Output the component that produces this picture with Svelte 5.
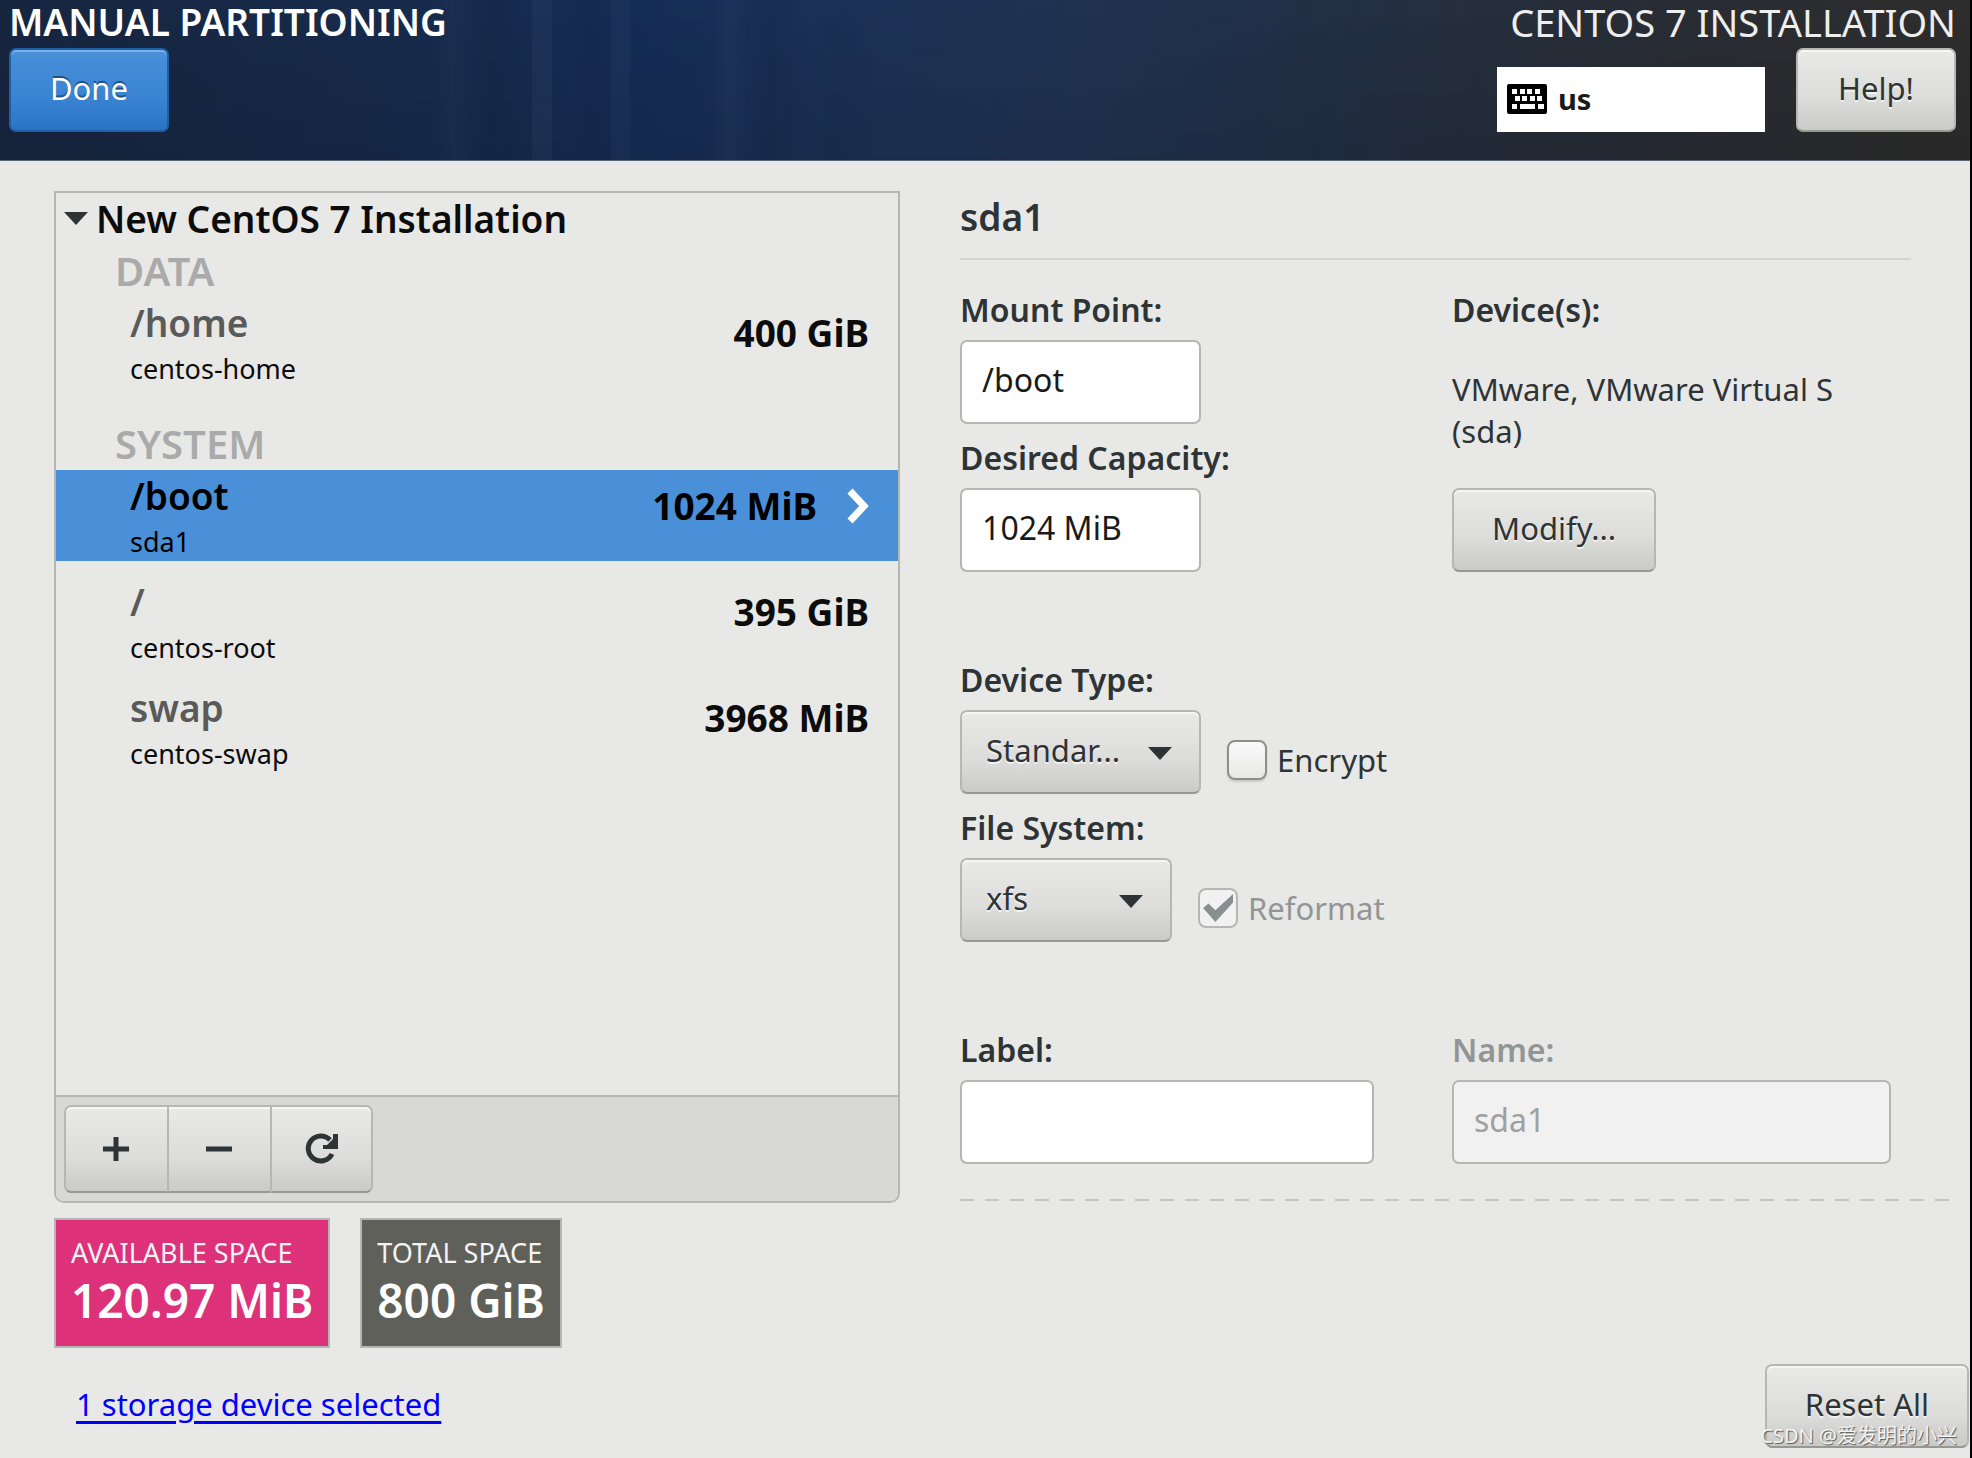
<script lang="ts">
	type Partition = { mount: string; device: string; size: string };

	const groups: { name: string; items: Partition[] }[] = [
		{
			name: 'DATA',
			items: [{ mount: '/home', device: 'centos-home', size: '400 GiB' }]
		},
		{
			name: 'SYSTEM',
			items: [
				{ mount: '/boot', device: 'sda1', size: '1024 MiB' },
				{ mount: '/', device: 'centos-root', size: '395 GiB' },
				{ mount: 'swap', device: 'centos-swap', size: '3968 MiB' }
			]
		}
	];

	// keyboard icon keys: x, y, width
	const keys = [
		[5, 5, 5], [13, 5, 5], [20, 5, 5], [28, 5, 5],
		[8, 12, 5], [15, 12, 5], [23, 12, 5], [30, 12, 5],
		[5, 20, 5], [13, 20, 15], [31, 20, 6]
	];

	let selected = $state('/boot');
	let open = $state(true);
	let mount_point = $state('/boot');
	let capacity = $state('1024 MiB');
	let encrypt = $state(false);
	let label = $state('');
</script>

<div class="page">
	<header>
		<div class="side">
			<h1>MANUAL PARTITIONING</h1>
			<button class="btn primary">Done</button>
		</div>
		<div class="side right">
			<p class="product">CENTOS 7 INSTALLATION</p>
			<div class="tools">
				<div class="keyboard">
					<svg width="40" height="30" viewBox="0 0 40 30" aria-hidden="true">
						<rect width="40" height="30" rx="2" />
						{#each keys as [x, y, w]}
							<rect {x} {y} width={w} height="5" fill="#fff" />
						{/each}
					</svg>
					<span>us</span>
				</div>
				<button class="btn help">Help!</button>
			</div>
		</div>
	</header>

	<main>
		<section class="left">
			<div class="panel">
				<div class="tree">
					<button class="root" onclick={() => (open = !open)}>
						<svg width="24" height="14" viewBox="0 0 24 14" aria-hidden="true">
							<path d="M0 0h24L12 13z" fill="#2e3436" />
						</svg>
						New CentOS 7 Installation
					</button>
					{#if open}
						{#each groups as group (group.name)}
							<h2 class="category">{group.name}</h2>
							<ul>
								{#each group.items as item (item.mount)}
									<li>
										<button
											class="row"
											class:selected={selected === item.mount}
											onclick={() => (selected = item.mount)}
										>
											<span class="names">
												<span class="mount">{item.mount}</span>
												<span class="device">{item.device}</span>
											</span>
											<span class="size">{item.size}</span>
											{#if selected === item.mount}
												<svg class="chevron" width="22" height="36" viewBox="0 0 22 36" aria-hidden="true">
													<path d="M3 3l14 15L3 33" fill="none" stroke="#fff" stroke-width="7" />
												</svg>
											{/if}
										</button>
									</li>
								{/each}
							</ul>
						{/each}
					{/if}
				</div>
				<div class="toolbar">
					<div class="group">
						<button class="btn" aria-label="Add">
							<svg width="34" height="34" viewBox="0 0 34 34">
								<path d="M16 5v24M3 17h26" stroke="#2e3436" stroke-width="5" />
							</svg>
						</button>
						<button class="btn" aria-label="Remove">
							<svg width="34" height="34" viewBox="0 0 34 34">
								<path d="M3 17h26" stroke="#2e3436" stroke-width="5" />
							</svg>
						</button>
						<button class="btn" aria-label="Reload">
							<svg width="34" height="34" viewBox="0 0 34 34">
								<path d="M27 22A12.500 12.500 0 1 1 25 8" fill="none" stroke="#2e3436" stroke-width="5" />
								<path d="M33 2v15H18v-4h4l6-6V2z" fill="#2e3436" />
							</svg>
						</button>
					</div>
				</div>
			</div>

			<div class="spaces">
				<div class="space available">
					<span>AVAILABLE SPACE</span>
					<strong>120.97 MiB</strong>
				</div>
				<div class="space">
					<span>TOTAL SPACE</span>
					<strong>800 GiB</strong>
				</div>
			</div>
		</section>

		<section class="details">
			<h2 class="title">sda1</h2>

			<div class="fields">
				<div>
					<label for="mount">Mount Point:</label>
					<input id="mount" class="entry short" type="text" bind:value={mount_point} />
					<label for="capacity">Desired Capacity:</label>
					<input id="capacity" class="entry short" type="text" bind:value={capacity} />
				</div>
				<div>
					<h3>Device(s):</h3>
					<p class="disk">VMware, VMware Virtual S (sda)</p>
					<button class="btn">Modify...</button>
				</div>
			</div>

			<div class="fields">
				<div>
					<label for="type">Device Type:</label>
					<div class="line">
						<div class="select type">
							<select id="type" class="btn"><option>Standar...</option></select>
							<svg width="24" height="13" viewBox="0 0 24 13" aria-hidden="true">
								<path d="M0 0h24L12 13z" fill="#2e3436" />
							</svg>
						</div>
						<label class="check">
							<input type="checkbox" bind:checked={encrypt} />
							Encrypt
						</label>
					</div>
					<label for="fs">File System:</label>
					<div class="line">
						<div class="select fs">
							<select id="fs" class="btn"><option>xfs</option></select>
							<svg width="24" height="13" viewBox="0 0 24 13" aria-hidden="true">
								<path d="M0 0h24L12 13z" fill="#2e3436" />
							</svg>
						</div>
						<label class="check disabled">
							<input type="checkbox" checked disabled />
							Reformat
						</label>
					</div>
				</div>
			</div>

			<div class="fields">
				<div>
					<label for="label">Label:</label>
					<input id="label" class="entry" type="text" bind:value={label} />
				</div>
				<div>
					<label for="name" class="disabled">Name:</label>
					<input id="name" class="entry" type="text" value="sda1" disabled />
				</div>
			</div>

			<div class="dashes"></div>
		</section>
	</main>

	<footer>
		<a href="#storage">1 storage device selected</a>
		<div class="reset">
			<button class="btn">Reset All</button>
			<span class="watermark">CSDN @爱发明的小兴</span>
		</div>
	</footer>
</div>

<style>
	:global(body) {
		background: #e8e8e6;
	}
	.page {
		display: flex;
		flex-direction: column;
		box-sizing: border-box;
		min-height: 100vh;
		border-right: 2px solid #000;
		background: #e8e8e6;
		color: #2e3436;
		font: 31px/42px 'Noto Sans', 'Noto Sans CJK SC', sans-serif;
	}
	h1, h2, h3, p, ul {
		margin: 0;
		padding: 0;
		font-size: inherit;
	}
	ul {
		list-style: none;
	}
	button, input, select {
		box-sizing: border-box;
		margin: 0;
		font: inherit;
		color: inherit;
	}

	/* header */
	header {
		display: flex;
		justify-content: space-between;
		padding: 0 14px 28px 9px;
		border-bottom: 1px solid #5b6579;
		background:
			linear-gradient(to right, transparent 22%, #ffffff05 23%, transparent 24%, #0000000c 25%, transparent 27%, #ffffff08 27% 28%, transparent 28% 29%, #0000000c 30%, transparent 31%, #ffffff06 31% 32%, transparent 32% 36%, #ffffff06 37%, transparent 38%, #0000000c 39%, transparent 41%, #00000008 43%, transparent 45%),
			linear-gradient(to bottom, transparent, #00000018),
			linear-gradient(to right, #16263f, #172a4a 18%, #152c55 32%, #1b3156 44%, #1f3250 55%, #212f46 66%, #252e3b 76%, #292c33 87%, #2d2d2d 97%);
		background-clip: padding-box;
		color: #fff;
	}
	.side {
		display: flex;
		flex-direction: column;
		align-items: flex-start;
		gap: 4px;
	}
	.right {
		align-items: flex-end;
	}
	h1 {
		font-size: 37px;
		font-weight: 600;
		line-height: 44px;
	}
	.product {
		font-size: 38px;
		line-height: 44px;
		color: #eee;
	}
	.tools {
		display: flex;
		align-items: flex-end;
		gap: 31px;
	}
	.keyboard {
		display: flex;
		align-items: center;
		gap: 11px;
		box-sizing: border-box;
		width: 268px;
		height: 65px;
		padding: 0 0 2px 10px;
		background: #fff;
		color: #1a1a1a;
		font-size: 29px;
		font-weight: 700;
	}

	/* buttons */
	.btn {
		height: 84px;
		padding: 0 38px 4px;
		border: 2px solid #b6b6b3;
		border-bottom-color: #989892;
		border-radius: 7px;
		background: linear-gradient(#e9e9e8, #dcdcda 60%, #cacac8);
		box-shadow: inset 0 2px #f6f6f5;
		color: #2e3436;
		text-shadow: 0 2px #f2f2f0;
	}
	.primary {
		width: 160px;
		border-color: #1f5fa8;
		background: linear-gradient(#4a90d9, #3983d2 60%, #2a74c4);
		box-shadow: inset 0 2px #80b1e4;
		color: #fff;
		text-shadow: 0 -2px #1f5287;
	}
	.help {
		width: 160px;
	}

	main {
		flex: 1;
		display: grid;
		grid-template-columns: 11fr 13fr;
		gap: 60px;
		padding: 30px 10px 0 54px;
	}
	.left {
		display: flex;
		flex-direction: column;
	}

	/* partition list */
	.panel {
		flex: 1;
		display: flex;
		flex-direction: column;
		border: 2px solid #b6b6b3;
		border-radius: 0 0 10px 10px;
		overflow: hidden;
	}
	.tree {
		flex: 1;
		font-size: 37px;
		font-weight: 600;
		line-height: 52px;
		color: #0c0c0c;
	}
	.root {
		display: flex;
		align-items: center;
		gap: 8px;
		padding: 0 0 0 8px;
		border: none;
		background: none;
	}
	.category {
		padding-left: 59px;
		font-size: 40px;
		font-weight: 600;
		color: #aaa;
	}
	ul + .category {
		margin-top: 30px;
	}
	ul {
		display: flex;
		flex-direction: column;
		gap: 15px;
	}
	.row {
		display: flex;
		align-items: flex-start;
		width: 100%;
		padding: 0 29px 0 74px;
		border: none;
		background: none;
		text-align: left;
	}
	.names {
		flex: 1;
		display: flex;
		flex-direction: column;
	}
	.mount {
		line-height: 52px;
		color: #5a5a5a;
	}
	.device {
		font-size: 27px;
		font-weight: 400;
		line-height: 39px;
	}
	.size {
		font-weight: 700;
		line-height: 72px;
	}
	.selected {
		background: #4a90d9;
		color: #000;
	}
	.selected .mount {
		color: #000;
	}
	.chevron {
		margin: 18px 0 0 30px;
	}
	.toolbar {
		padding: 8px;
		border-top: 2px solid #b6b6b3;
		background: #d8d8d6;
	}
	.group {
		display: flex;
	}
	.group .btn {
		display: grid;
		place-items: center;
		width: 103px;
		height: 88px;
		padding: 0;
		border-right-width: 0;
		border-radius: 0;
	}
	.group .btn:first-child {
		border-radius: 7px 0 0 7px;
	}
	.group .btn:last-child {
		border-right-width: 2px;
		border-radius: 0 7px 7px 0;
	}

	/* space summary */
	.spaces {
		display: flex;
		gap: 30px;
		margin-top: 15px;
	}
	.space {
		display: flex;
		flex-direction: column;
		padding: 12px 15px 20px;
		border: 2px solid #b6b6b3;
		background: #5f6059;
		color: #fff;
	}
	.available {
		background: #dd3279;
	}
	.space span {
		font-size: 27px;
		line-height: 42px;
		color: #f3f3f3;
	}
	.space strong {
		font-size: 46px;
		font-weight: 600;
		line-height: 52px;
	}

	/* details form */
	.title {
		margin-right: 49px;
		padding-bottom: 15px;
		border-bottom: 2px solid #d2d2d0;
		font-size: 37px;
		font-weight: 600;
		line-height: 52px;
	}
	.fields {
		display: grid;
		grid-template-columns: 414fr 439fr;
		gap: 78px;
		margin-top: 74px;
		padding-right: 69px;
	}
	.title + .fields {
		margin-top: 16px;
	}
	.fields label, h3 {
		display: block;
		padding-top: 4px;
		font-size: 32px;
		font-weight: 600;
		line-height: 60px;
	}
	.entry {
		display: block;
		width: 100%;
		height: 84px;
		padding: 0 20px 6px;
		border: 2px solid #b6b6b3;
		border-radius: 7px;
		background: #fff;
		color: #1a1a1a;
		font-size: 32px;
	}
	.entry:disabled {
		background: #f1f1f1;
		color: #a0a0a0;
	}
	.short {
		width: 241px;
	}
	.disk {
		margin: 28px 0 36px;
	}
	.line {
		display: flex;
		gap: 26px;
	}
	.select {
		position: relative;
	}
	.select svg {
		position: absolute;
		right: 29px;
		top: 37px;
		pointer-events: none;
	}
	select.btn {
		width: 100%;
		padding: 0 24px 4px;
		appearance: none;
	}
	.type {
		width: 241px;
	}
	.fs {
		width: 212px;
	}
	.fields .check {
		display: flex;
		align-items: center;
		gap: 10px;
		padding-top: 16px;
		font-size: 31px;
		font-weight: 400;
	}
	.check input {
		display: grid;
		place-items: center;
		width: 40px;
		height: 40px;
		border: 2px solid #8f8f89;
		border-radius: 8px;
		background: linear-gradient(#fafafa, #e8e8e6);
		box-shadow: 0 2px 2px #0002;
		appearance: none;
	}
	.check input:checked::after {
		content: '';
		width: 30px;
		height: 28px;
		background: #8b8e8f;
		clip-path: polygon(0 50%, 18% 34%, 41% 58%, 100% 0, 100% 30%, 41% 100%);
	}
	.check input:disabled {
		border-color: #b6b6b3;
		background: #f1f1f1;
		box-shadow: none;
	}
	.fields .disabled {
		color: #929596;
	}
	.dashes {
		height: 2px;
		margin-top: 35px;
		background: repeating-linear-gradient(to right, #c4c4c2 0 14px, transparent 14px 25px);
	}

	footer {
		display: flex;
		align-items: center;
		justify-content: space-between;
		padding: 16px 1px 10px 76px;
	}
	a {
		padding-bottom: 4px;
		color: #00f;
		text-decoration-thickness: 3px;
		text-underline-offset: 5px;
	}
	.reset {
		position: relative;
	}
	.watermark {
		position: absolute;
		right: 12px;
		bottom: 0;
		color: #f4f4f4;
		font-size: 20px;
		line-height: 24px;
		white-space: nowrap;
		text-shadow: 1px 1px 1px #555;
	}
</style>
